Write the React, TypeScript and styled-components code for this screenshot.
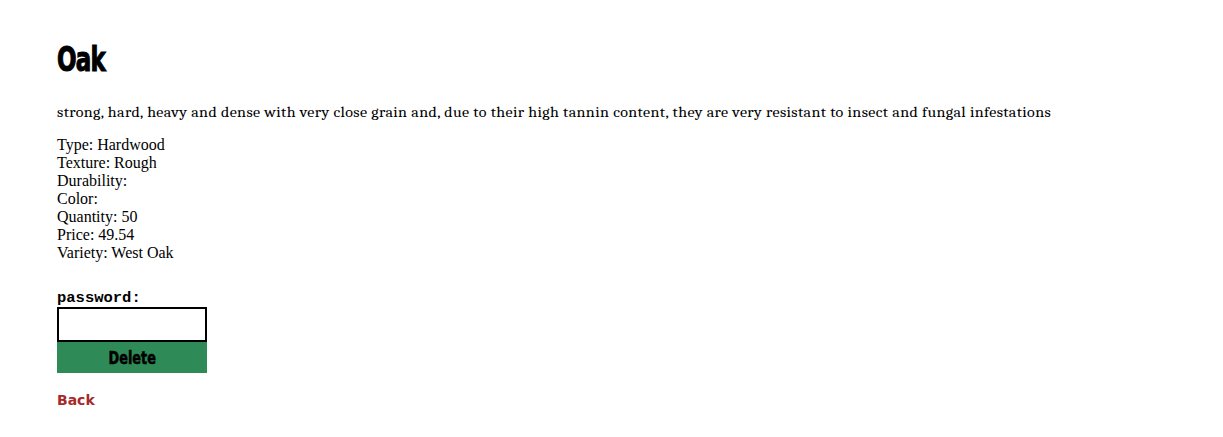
import { createGlobalStyle, styled } from "styled-components";

const GlobalStyle = createGlobalStyle`
  body {
    margin: 0;
    background: #fff;
    color: #000;
  }
`;

const Page = styled.div`
  padding: 34px 57px 20px;
`;

const Title = styled.h1`
  margin: 0 0 18px;
  font-family: Impact, "Liberation Sans Narrow", "DejaVu Sans Condensed", sans-serif;
  font-weight: 700;
  font-size: 32px;
  line-height: 50px;
  letter-spacing: -1px;
  -webkit-text-stroke: 1px #000;
  transform: scale(0.8, 1.05);
  transform-origin: left center;
`;

const Description = styled.p`
  margin: 0 0 14px;
  font-family: Cambria, "DejaVu Serif", serif;
  font-size: 16px;
  letter-spacing: 0.37px;
  line-height: 20px;
  transform: scaleY(0.92);
  transform-origin: left center;
`;

const Details = styled.div`
  font-family: "Liberation Serif", "Times New Roman", serif;
  font-size: 16px;
  line-height: 18px;
`;

const Form = styled.form`
  display: flex;
  flex-direction: column;
  width: 150px;
  margin-top: 27px;
`;

const Label = styled.label`
  font-family: "Liberation Mono", "Courier New", monospace;
  font-weight: 700;
  font-size: 15.5px;
  line-height: 18px;
`;

const Input = styled.input`
  box-sizing: border-box;
  width: 150px;
  height: 35px;
  border: 2px solid #000;
  padding: 0 4px;
  margin: 0;
`;

const DeleteButton = styled.button`
  width: 150px;
  height: 31px;
  border: none;
  margin: 0;
  padding: 0;
  background: #2e8b57;
  color: #000;
  font-family: Impact, "Liberation Sans Narrow", "DejaVu Sans Condensed", sans-serif;
  font-weight: 700;
  font-size: 17px;
`;

const ButtonText = styled.span`
  display: inline-block;
  -webkit-text-stroke: 0.5px #000;
  transform: scale(0.84, 1.05);
`;

const BackLink = styled.a`
  display: inline-block;
  margin-top: 19px;
  color: #a52a2a;
  font-family: Verdana, "DejaVu Sans", sans-serif;
  font-weight: 700;
  font-size: 14px;
  text-decoration: none;
`;

const details = [
  "Type: Hardwood",
  "Texture: Rough",
  "Durability:",
  "Color:",
  "Quantity: 50",
  "Price: 49.54",
  "Variety: West Oak",
];

export default function App() {
  return (
    <>
      <GlobalStyle />
      <Page>
        <Title>Oak</Title>
        <Description>
          strong, hard, heavy and dense with very close grain and, due to their high tannin content, they are very
          resistant to insect and fungal infestations
        </Description>
        <Details>
          {details.map((d) => (
            <div key={d}>{d}</div>
          ))}
        </Details>
        <Form onSubmit={(e) => e.preventDefault()}>
          <Label htmlFor="password">password:</Label>
          <Input id="password" type="password" />
          <DeleteButton type="submit">
            <ButtonText>Delete</ButtonText>
          </DeleteButton>
        </Form>
        <BackLink href="#">Back</BackLink>
      </Page>
    </>
  );
}
